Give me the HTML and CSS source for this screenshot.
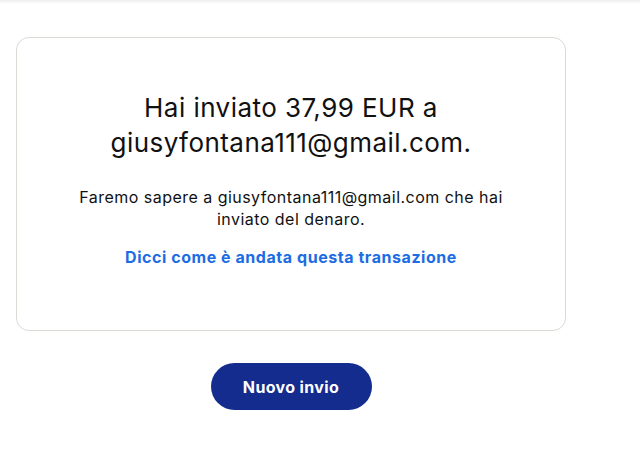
FILE: index.html
```html
<!DOCTYPE html>
<html lang="it">
<head>
<meta charset="utf-8">
<title>Invio completato</title>
<link rel="stylesheet" href="styles.css">
</head>
<body>
<div class="topshade"></div>
<main class="page">
  <section class="card">
    <h1 class="title">Hai inviato 37,99 EUR a<br>giusyfontana111@gmail.com.</h1>
    <p class="note">Faremo sapere a giusyfontana111@gmail.com che hai<br>inviato del denaro.</p>
    <a class="feedback" href="#">Dicci come è andata questa transazione</a>
  </section>
  <div class="actions">
    <a class="btn" href="#">Nuovo invio</a>
  </div>
</main>
</body>
</html>
```

FILE: styles.css
```css
* { box-sizing: border-box; }
html, body { margin: 0; padding: 0; background: #fff; }
body {
  font-family: Inter, Lato, "Noto Sans", sans-serif;
  color: #111;
  width: 640px;
  height: 462px;
  overflow: hidden;
  position: relative;
}
.topshade {
  position: absolute;
  left: 0; right: 0; top: 0;
  height: 4px;
  background: linear-gradient(#eeeeee, rgba(255,255,255,0));
}
.page {
  padding: 37px 0 0 16px;
  width: 566px;
}
.card {
  border: 1px solid #dcdad4;
  border-radius: 13px;
  height: 294px;
  width: 550px;
  padding-top: 52px;
  text-align: center;
}
.title {
  margin: 0;
  font-weight: 400;
  font-size: 26px;
  letter-spacing: 0.45px;
  line-height: 35px;
  color: #111;
}
.note {
  margin: 26px 0 0;
  font-size: 16px;
  letter-spacing: 0.47px;
  line-height: 22px;
}
.feedback {
  display: inline-block;
  margin-top: 16px;
  font-size: 16px;
  font-weight: 700;
  letter-spacing: 0.55px;
  color: #1c6ce3;
  text-decoration: none;
  line-height: 22px;
}
.actions {
  display: flex;
  justify-content: center;
  margin-top: 32px;
}
.btn {
  display: flex;
  align-items: center;
  justify-content: center;
  width: 161px;
  height: 47px;
  border-radius: 24px;
  background: #142c8e;
  color: #fff;
  font-weight: 700;
  font-size: 16px;
  letter-spacing: 0.36px;
  text-decoration: none;
}
```
